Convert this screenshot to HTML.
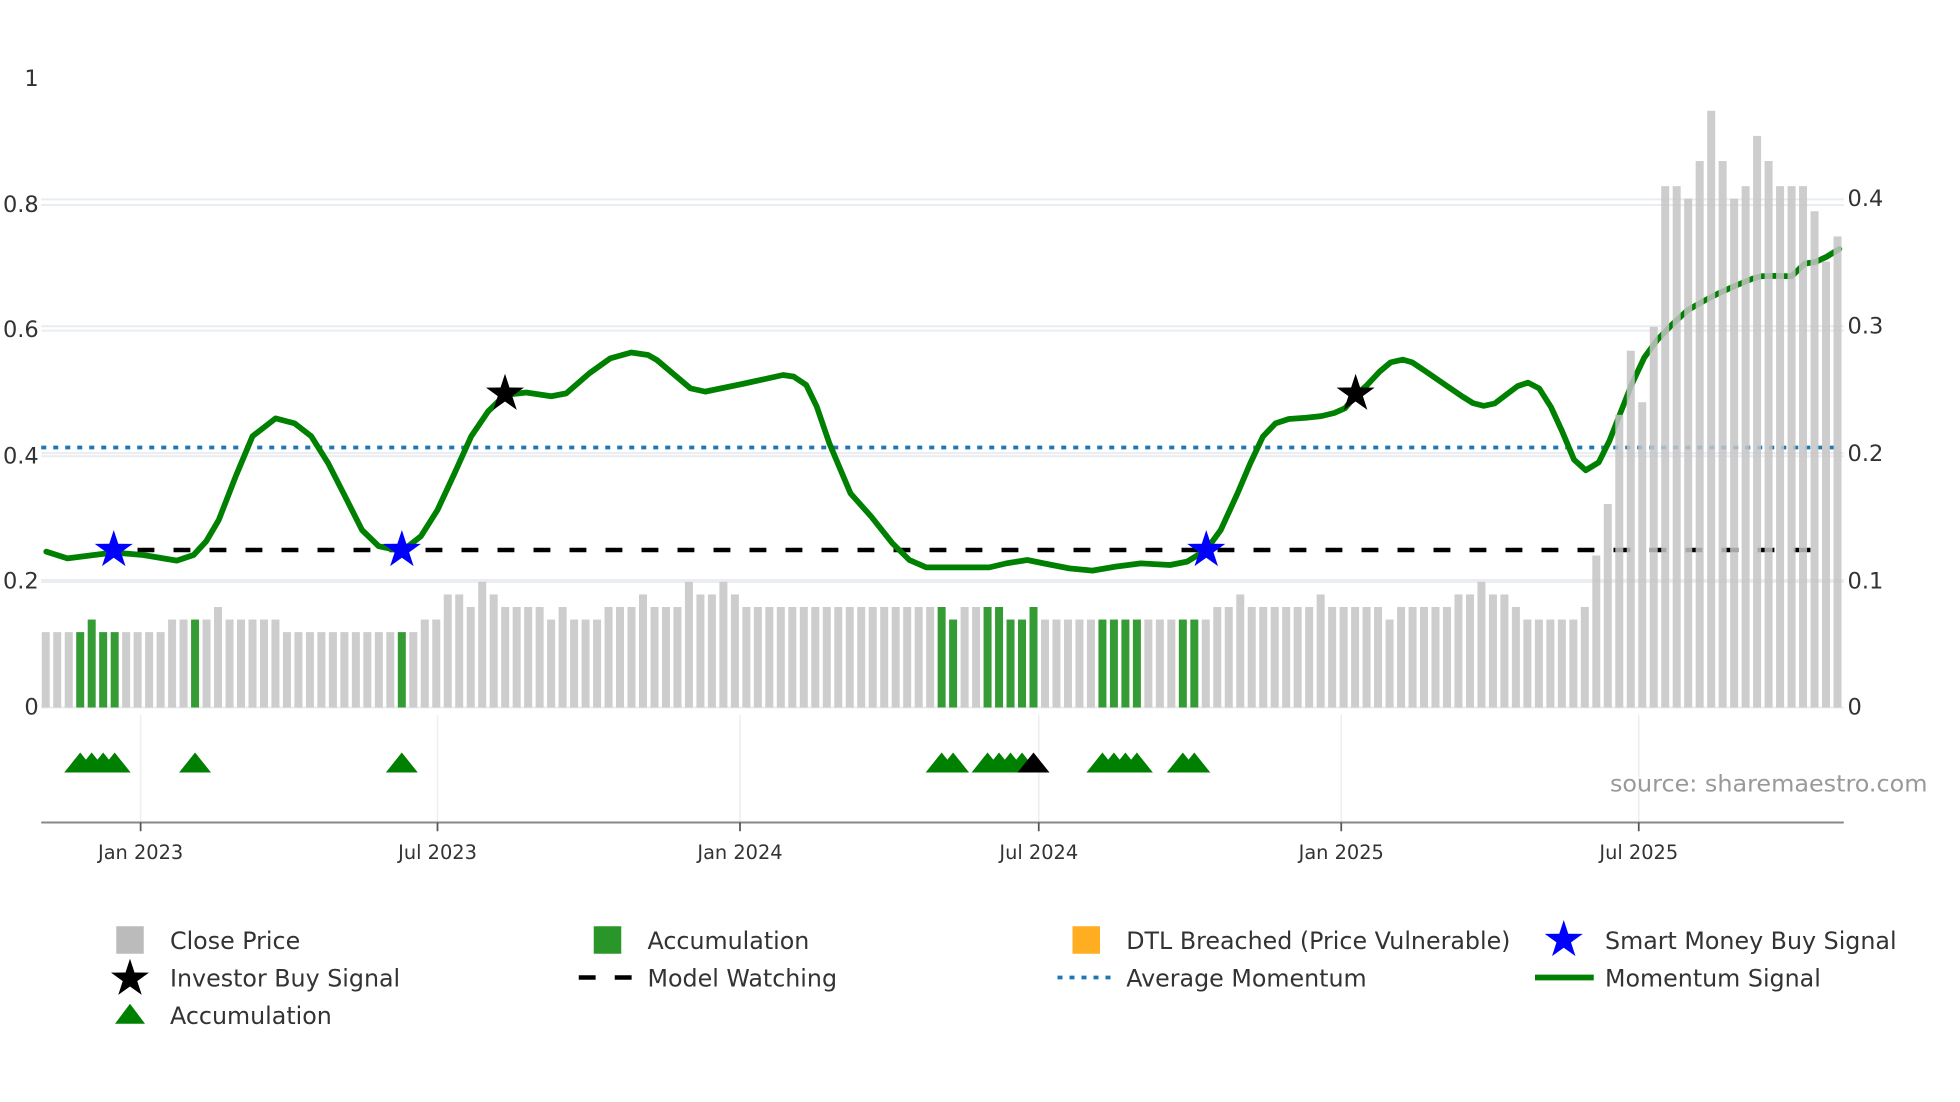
<!DOCTYPE html>
<html><head><meta charset="utf-8">
<style>
html,body{margin:0;padding:0;background:#fff;}
svg{display:block;}
text{font-family:"DejaVu Sans","Liberation Sans",sans-serif;fill:#333;}
</style></head>
<body>
<svg id="c" width="1960" height="1102" viewBox="0 0 1568 881.6" xmlns="http://www.w3.org/2000/svg">
<rect width="1568" height="881.6" fill="#fff"/>
<g stroke="#e9ecf0" stroke-width="1.6">
<line x1="33" x2="1475" y1="164" y2="164"/><line x1="33" x2="1475" y1="159.5" y2="159.5"/>
<line x1="33" x2="1475" y1="264.5" y2="264.5"/><line x1="33" x2="1475" y1="261" y2="261"/>
<line x1="33" x2="1475" y1="365" y2="365"/><line x1="33" x2="1475" y1="362.5" y2="362.5"/>
<line x1="33" x2="1475" y1="465.5" y2="465.5"/><line x1="33" x2="1475" y1="464" y2="464"/>
<line x1="33" x2="1475" y1="566" y2="566"/>
</g>
<g stroke="#eceef1" stroke-width="1.2">
<line x1="112.5" x2="112.5" y1="572" y2="658"/><line x1="350" x2="350" y1="572" y2="658"/>
<line x1="592" x2="592" y1="572" y2="658"/><line x1="831" x2="831" y1="572" y2="658"/>
<line x1="1073" x2="1073" y1="572" y2="658"/><line x1="1311" x2="1311" y1="572" y2="658"/>
</g>
<g font-size="18" text-anchor="end" dominant-baseline="central">
<text x="31" y="63">1</text><text x="31" y="164">0.8</text><text x="31" y="264">0.6</text>
<text x="31" y="365">0.4</text><text x="31" y="465">0.2</text><text x="31" y="566">0</text>
</g>
<g font-size="18" dominant-baseline="central">
<text x="1478" y="159">0.4</text><text x="1478" y="261">0.3</text><text x="1478" y="363">0.2</text>
<text x="1478" y="465">0.1</text><text x="1478" y="566">0</text>
</g>
<line x1="33" x2="1471" y1="358" y2="358" stroke="#1f77b4" stroke-width="3" stroke-dasharray="4 5.6"/>
<line x1="110" x2="1460" y1="440" y2="440" stroke="#000" stroke-width="3.6" stroke-dasharray="13.5 15.3"/>
<polyline fill="none" stroke="#008000" stroke-width="4.6" stroke-linejoin="round" stroke-linecap="round" points="
37,441.3 53.9,446.7 90.9,442 114.5,444 141.4,448.5 154.9,444 165,433 175,416 188.6,381 202,349 220.5,334.7 235.7,338.7 249,349 262.6,370.7 276,397 289.6,424 303,437 321.5,441 336.7,429 350,408 363.6,378.7 377,349 390.6,329 404,316 420.9,314 441,317 453,314.7 471.4,298.7 488.2,286.7 505,282 518.5,284 525.5,288 552.4,310.7 564.2,313.3 596,306.7 626.5,300 635,301.3 645,308 653.4,325.3 663.5,354.7 680.4,394.7 697,413.3 714,434.7 727.5,448 741,453.9 791.5,453.9 805,450.7 821.8,448 835,450.7 855.4,454.7 874,456.5 892.5,453.3 912.7,450.7 936,452 949.7,449.3 964.9,440 976.6,424 990,394.7 1000.2,370.7 1010.3,349.3 1020.4,338.7 1031,335.2 1044.8,334.2 1057,332.9 1067.4,330.4 1076,326.6 1084.7,316.2 1093.4,308.3 1103.8,297.2 1112.5,289.9 1122.2,287.7 1129.8,289.9 1142,298.1 1155.8,307.6 1169.7,317.1 1178.4,322.5 1187,324.7 1195.7,322.8 1204.4,316.2 1214.1,308.9 1222.4,306.1 1231.4,310.8 1240.8,325.7 1249.5,344.6 1259.2,367.7 1268.6,376.2 1279,369.9 1287.6,352.5 1296.3,330.4 1305,308.3 1315.4,286.1 1325.8,271.9 1338,259.3 1350.1,248.2 1362.2,241.2 1374.4,234.9 1388.2,228.6 1402.1,222.9 1409,221 1419.5,220.7 1433.3,221 1438.5,216 1443.7,210.9 1452.4,209.6 1461.1,205.5 1471.5,199.2"/>
<g id="bars"></g>
<g id="tris"></g>
<defs>
<path id="star" d="M0,-16 L3.6,-5 L15.2,-4.9 L5.8,1.9 L9.4,12.9 L0,6.2 L-9.4,12.9 L-5.8,1.9 L-15.2,-4.9 L-3.6,-5 Z"/>
</defs>
<use href="#star" x="91" y="440" fill="#0000ff"/>
<use href="#star" x="321.5" y="440" fill="#0000ff"/>
<use href="#star" x="965" y="440" fill="#0000ff"/>
<use href="#star" x="404" y="315" fill="#000"/>
<use href="#star" x="1084.5" y="315" fill="#000"/>
<line x1="33" x2="1475" y1="658" y2="658" stroke="#888" stroke-width="1.6"/>
<g stroke="#555" stroke-width="1.4">
<line x1="112.5" x2="112.5" y1="658" y2="665"/><line x1="350" x2="350" y1="658" y2="665"/>
<line x1="592" x2="592" y1="658" y2="665"/><line x1="831" x2="831" y1="658" y2="665"/>
<line x1="1073" x2="1073" y1="658" y2="665"/><line x1="1311" x2="1311" y1="658" y2="665"/>
</g>
<g font-size="15.5" text-anchor="middle">
<text x="112.5" y="687">Jan 2023</text><text x="350" y="687">Jul 2023</text>
<text x="592" y="687">Jan 2024</text><text x="831" y="687">Jul 2024</text>
<text x="1073" y="687">Jan 2025</text><text x="1311" y="687">Jul 2025</text>
</g>
<text x="1288" y="633" font-size="18.7" textLength="254" lengthAdjust="spacingAndGlyphs" style="fill:#999">source: sharemaestro.com</text>
<g font-size="19">
<rect x="93" y="741" width="22" height="22" fill="#bbb"/>
<text x="136" y="759">Close Price</text>
<use href="#star" x="104" y="783" fill="#000"/>
<text x="136" y="789">Investor Buy Signal</text>
<polygon points="92,819 116,819 104,803" fill="#008000"/>
<text x="136" y="819">Accumulation</text>

<rect x="475" y="741" width="22" height="22" fill="#2a962a"/>
<text x="518" y="759">Accumulation</text>
<line x1="463" x2="506" y1="782" y2="782" stroke="#000" stroke-width="3.6" stroke-dasharray="13.5 15.3"/>
<text x="518" y="789">Model Watching</text>

<rect x="858" y="741" width="22" height="22" fill="#ffae22"/>
<text x="901" y="759">DTL Breached (Price Vulnerable)</text>
<line x1="846" x2="890" y1="782" y2="782" stroke="#1f77b4" stroke-width="3" stroke-dasharray="4 5.6"/>
<text x="901" y="789">Average Momentum</text>

<use href="#star" x="1251" y="752" fill="#0000ff"/>
<text x="1284" y="759">Smart Money Buy Signal</text>
<line x1="1228" x2="1275" y1="782" y2="782" stroke="#008000" stroke-width="4.6"/>
<text x="1284" y="789">Momentum Signal</text>
</g>
</svg>
<script>
(function(){
var ns="http://www.w3.org/2000/svg";
var H=[6,6,6,6,7,6,6,6,6,6,6,7,7,7,7,8,7,7,7,7,7,6,6,6,6,6,6,6,6,6,6,6,6,7,7,9,9,8,10,9,8,8,8,8,7,8,7,7,7,8,8,8,9,8,8,8,10,9,9,10,9,
8,8,8,8,8,8,8,8,8,8,8,8,8,8,8,8,8,8,7,8,8,8,8,7,7,8,7,7,7,7,7,7,7,7,7,7,7,7,7,7,7,8,8,9,8,8,8,
8,8,8,9,8,8,8,8,8,7,8,8,8,8,8,9,9,10,9,9,8,7,7,7,7,7,8,12.1,16.2,23.3,28.4,24.3,30.3,41.5,41.5,40.5,43.5,47.5,43.5,40.5,41.5,45.5,43.5,41.5,41.5,41.5,39.5,35.5,37.5];
var G={3:1,4:1,5:1,6:1,13:1,31:1,78:1,79:1,82:1,83:1,84:1,85:1,86:1,92:1,93:1,94:1,95:1,99:1,100:1};
var bars=document.getElementById('bars'),tris=document.getElementById('tris');
var n=H.length,x0=36.6,step=(1470-36.6)/(n-1);
for(var i=0;i<n;i++){
 var cx=x0+step*i,h=H[i]*10.05;
 var r=document.createElementNS(ns,'rect');
 r.setAttribute('x',(cx-3.2).toFixed(2));r.setAttribute('width','6.4');
 r.setAttribute('y',(566-h).toFixed(2));r.setAttribute('height',h.toFixed(2));
 if(G[i]){r.setAttribute('fill','#359b35');}
 else{r.setAttribute('fill','#c4c4c4');r.setAttribute('fill-opacity','0.85');}
 bars.appendChild(r);
 if(G[i]){
  var p=document.createElementNS(ns,'polygon');
  p.setAttribute('points',(cx-12.8)+',618 '+(cx+12.8)+',618 '+cx+',602');
  p.setAttribute('fill',i==86?'#000':'#008000');
  tris.appendChild(p);
 }
}
var last=tris.querySelector('polygon[fill="#000"]');if(last)tris.appendChild(last);
})();
</script>
</body></html>
